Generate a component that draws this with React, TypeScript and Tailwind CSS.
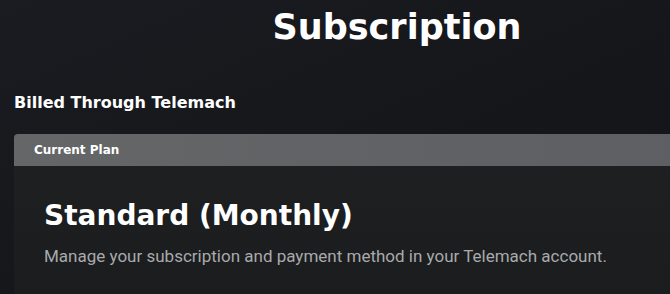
import React from 'react';

const App = () => {
  return (
    <div className="h-[294px] w-[670px] overflow-hidden bg-gradient-to-br from-[#1b1c21] via-[#15171b] to-[#121417] font-['DejaVu_Sans','Liberation_Sans',sans-serif] text-white">
      <div className="w-[794px] px-[14px]">
        {/* Page title */}
        <h1 className="pt-[7px] text-center text-[35px] font-bold leading-[40px]">Subscription</h1>

        <h2 className="mt-[46px] text-[16px] font-bold leading-[20px]">Billed Through Telemach</h2>

        {/* Plan card */}
        <section className="mt-[21px] overflow-hidden rounded-t-[4px] bg-gradient-to-b from-[#1e2022] to-[#1a1c1e]">
          <div className="flex h-[32px] items-center bg-gradient-to-r from-[#646668] to-[#5c5e61] px-[20px] text-[12px] font-bold">
            Current Plan
          </div>
          <div className="px-[30px] pb-[30px] pt-[33px]">
            <h3 className="text-[28px] font-bold leading-[34px]">Standard (Monthly)</h3>
            <p className="mt-[12px] font-['Roboto','Liberation_Sans',sans-serif] text-[17px] leading-[22px] text-[#a9aaab]">
              Manage your subscription and payment method in your Telemach account.
            </p>
          </div>
        </section>
      </div>
    </div>
  );
};

export default App;
